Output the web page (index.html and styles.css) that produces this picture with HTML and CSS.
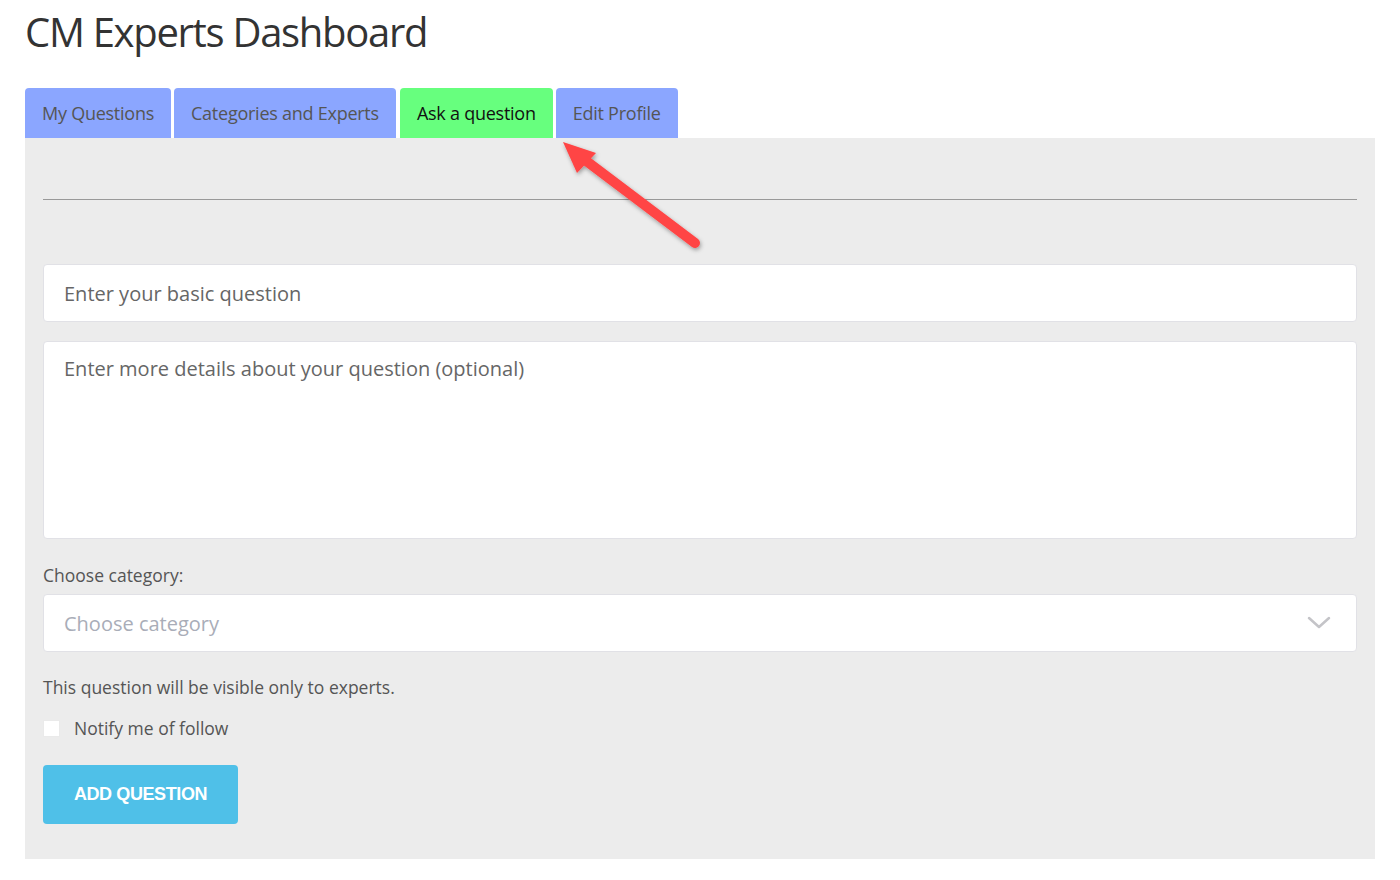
FILE: index.html
```html
<!DOCTYPE html>
<html lang="en">
<head>
    <meta charset="UTF-8">
    <meta name="viewport" content="width=device-width, initial-scale=1.0">
    <title>CM Experts Dashboard</title>
    <link rel="stylesheet" href="styles.css">
</head>
<body>
    <div class="page">
        <h1 class="titre">CM Experts Dashboard</h1>
        <div class="tabs">
            <div class="tab">My Questions</div>
            <div class="tab">Categories and Experts</div>
            <div class="tab active">Ask a question</div>
            <div class="tab">Edit Profile</div>
        </div>
        <div class="panel">
            <hr class="sep">
            <input class="champ" type="text" placeholder="Enter your basic question">
            <textarea class="champ details" placeholder="Enter more details about your question (optional)"></textarea>
            <label class="label">Choose category:</label>
            <div class="selectbox">
                <select class="champ choix">
                    <option>Choose category</option>
                </select>
                <svg class="chevron" width="24" height="14" viewBox="0 0 24 14">
                    <path d="M2 2 L12 11 L22 2" fill="none" stroke="#c4c4c8" stroke-width="2.5" stroke-linecap="round" stroke-linejoin="round"/>
                </svg>
            </div>
            <p class="note">This question will be visible only to experts.</p>
            <div class="notify">
                <input class="check" type="checkbox">
                <span>Notify me of follow</span>
            </div>
            <button class="bouton">ADD QUESTION</button>
        </div>
        <!-- fleche rouge -->
        <svg class="fleche" width="1400" height="880" viewBox="0 0 1400 880">
            <defs>
                <filter id="ombre" x="-20%" y="-20%" width="140%" height="140%">
                    <feDropShadow dx="1" dy="2" stdDeviation="2" flood-color="#000" flood-opacity="0.35"/>
                </filter>
            </defs>
            <g filter="url(#ombre)" fill="#ff4444">
                <line x1="585" y1="160" x2="695" y2="243" stroke="#ff4444" stroke-width="10" stroke-linecap="round"/>
                <polygon points="563,142 596,153 577,173"/>
            </g>
        </svg>
    </div>
</body>
</html>
```

FILE: styles.css
```css
body{
    margin: 0;
    font-family: 'Open Sans', sans-serif;
    background-color: white;
}
.page{
    position: relative;
    padding: 8px 25px 0 25px;
}
.titre{
    margin: 0;
    font-size: 40px;
    line-height: 48px;
    font-weight: normal;
    color: #333;
    letter-spacing: -1.3px;
}
.tabs{
    display: flex;
    gap: 3px;
    margin-top: 32px;
}
.tab{
    height: 50px;
    line-height: 50px;
    padding: 0 17px;
    font-size: 18px;
    letter-spacing: -0.25px;
    color: #555;
    background-color: #8ba6ff;
    border-radius: 4px 4px 0 0;
}
.tab.active{
    background-color: #67ff7e;
    color: #111;
    margin-left: 1px;
}
.panel{
    background-color: #ececec;
    padding: 18px 18px 35px 18px;
    display: flex;
    flex-direction: column;
    align-items: flex-start;
}
.sep{
    width: 100%;
    margin: 43px 0 0 0;
    border: none;
    border-top: 1px solid #999;
}
.champ{
    box-sizing: border-box;
    width: 100%;
    background-color: white;
    border: 1px solid #e1e1e6;
    border-radius: 4px;
    font-family: 'Open Sans', sans-serif;
    font-size: 20px;
    color: #666;
    padding: 0 20px;
    outline: none;
}
.champ::placeholder{
    color: #666;
}
input.champ{
    height: 58px;
    margin-top: 64px;
}
.details{
    height: 198px;
    margin-top: 19px;
    padding-top: 13px;
    resize: none;
    line-height: 28px;
}
.label{
    font-size: 17.5px;
    color: #555;
    margin-top: 24px;
    line-height: 24px;
}
.selectbox{
    position: relative;
    width: 100%;
    margin-top: 7px;
}
.choix{
    height: 58px;
    appearance: none;
    -webkit-appearance: none;
    color: #a9adb8;
}
.chevron{
    position: absolute;
    right: 26px;
    top: 22px;
}
.note{
    font-size: 17.5px;
    color: #555;
    margin: 23px 0 0 0;
    line-height: 24px;
}
.notify{
    display: flex;
    align-items: center;
    gap: 14px;
    margin-top: 17px;
    font-size: 17.5px;
    color: #555;
    line-height: 24px;
}
.check{
    appearance: none;
    -webkit-appearance: none;
    width: 17px;
    height: 17px;
    margin: 0;
    background-color: white;
    border: 1px solid #eaeaea;
}
.bouton{
    margin-top: 25px;
    width: 195px;
    height: 59px;
    background-color: #4fc0e8;
    color: white;
    border: none;
    border-radius: 4px;
    font-family: 'Liberation Sans', Arial, sans-serif;
    font-weight: bold;
    font-size: 18px;
    letter-spacing: -0.4px;
}
.fleche{
    position: absolute;
    top: 0;
    left: 0;
    pointer-events: none;
}
```
